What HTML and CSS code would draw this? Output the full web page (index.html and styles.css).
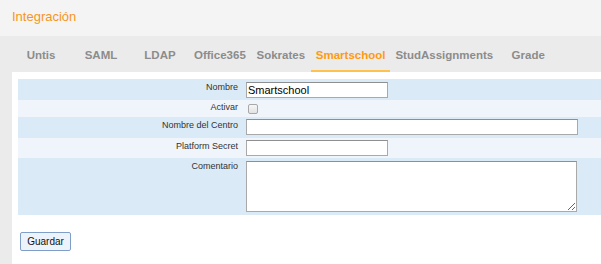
FILE: index.html
```html
<!DOCTYPE html>
<html lang="es">
<head>
  <meta charset="UTF-8" />
  <title>Integración</title>
  <link rel="stylesheet" href="styles.css">
</head>
<body>
  <div class="page-header">
    <h1>Integración</h1>
  </div>

  <div class="workspace">
    <ul class="tabs">
      <li>Untis</li>
      <li>SAML</li>
      <li class="narrow">LDAP</li>
      <li>Office365</li>
      <li>Sokrates</li>
      <li class="active">Smartschool</li>
      <li>StudAssignments</li>
      <li>Grade</li>
    </ul>

    <div class="panel">
      <form class="settings">
        <div class="row dark">
          <label for="nombre">Nombre</label>
          <div class="field"><input type="text" id="nombre" class="short" value="Smartschool"></div>
        </div>
        <div class="row light check-row">
          <label for="activar">Activar</label>
          <div class="field"><input type="checkbox" id="activar"></div>
        </div>
        <div class="row dark">
          <label for="centro">Nombre del Centro</label>
          <div class="field"><input type="text" id="centro" class="long"></div>
        </div>
        <div class="row light">
          <label for="secret">Platform Secret</label>
          <div class="field"><input type="text" id="secret" class="short"></div>
        </div>
        <div class="row dark area-row">
          <label for="comentario">Comentario</label>
          <div class="field"><textarea id="comentario"></textarea></div>
        </div>

        <button type="button" class="save-button">Guardar</button>
      </form>
    </div>
  </div>
</body>
</html>
```

FILE: styles.css
```css
html, body {
  margin: 0;
  height: 100%;
}

body {
  font-family: "Liberation Sans", Arial, sans-serif;
  background: #ebebeb;
  display: flex;
  flex-direction: column;
}

.page-header {
  background: #f4f4f4;
  height: 36px;
  padding-left: 12px;
}

.page-header h1 {
  margin: 0;
  font-size: 13px;
  font-weight: normal;
  color: #f7941d;
  line-height: 33px;
}

.workspace {
  flex: 1;
  display: flex;
  flex-direction: column;
}

/* tab strip */
.tabs {
  list-style: none;
  margin: 0;
  padding: 0 0 0 11px;
  height: 36px;
  display: flex;
}

.tabs li {
  min-width: 60px;
  padding: 0 5px;
  box-sizing: border-box;
  text-align: center;
  font-size: 11.5px;
  font-weight: bold;
  color: #8c8c8c;
  line-height: 39px;
  height: 36px;
  white-space: nowrap;
}

.tabs li.narrow {
  min-width: 58px;
}

.tabs li.active {
  color: #ff9a12;
  border-bottom: 2px solid #ffc24d;
}

.panel {
  flex: 1;
  background: #fff;
  margin-left: 12px;
  padding: 7px 0 0 6px;
}

/* form rows */
.row {
  display: grid;
  grid-template-columns: 228px 1fr;
  height: 21px;
  box-sizing: border-box;
}

.row.dark {
  background: #dbeaf7;
}

.row.light {
  background: #eff5fb;
}

.row label {
  text-align: right;
  padding: 3px 8px 0 0;
  font-size: 9px;
  line-height: 11px;
  color: #333;
}

.row .field {
  padding-top: 3px;
}

.row:nth-child(3) .field,
.row:nth-child(4) .field {
  padding-top: 2px;
}

.row:nth-child(4) {
  height: 20px;
}

.check-row {
  height: 17px;
}

.check-row label {
  padding-top: 2px;
}

.check-row .field {
  padding-top: 4px;
}

.area-row {
  height: 57px;
}

.row input[type="text"],
.row textarea {
  display: block;
  box-sizing: border-box;
  height: 16px;
  margin: 0;
  padding: 0 1px;
  border: 1px solid #a9a9a9;
  border-top-color: #8f8f8f;
  font-family: "Liberation Sans", Arial, sans-serif;
  font-size: 11px;
  color: #000;
}

.row input.short {
  width: 142px;
}

.row input.long {
  width: 332px;
}

.row input[type="checkbox"] {
  display: block;
  width: 10px;
  height: 10px;
  margin: 0 0 0 2px;
  appearance: none;
  border: 1px solid #a8a8a8;
  border-radius: 2px;
  background: linear-gradient(#f6f6f6, #e2e2e2);
}

.row textarea {
  width: 331px;
  height: 51px;
  resize: both;
}

.save-button {
  display: block;
  margin: 17px 0 0 2px;
  width: 51px;
  height: 19px;
  padding: 0;
  font-family: "Liberation Sans", Arial, sans-serif;
  font-size: 10px;
  color: #111;
  background: #edf3fb;
  border: 1px solid #7f9fc9;
  border-radius: 2px;
}
```
